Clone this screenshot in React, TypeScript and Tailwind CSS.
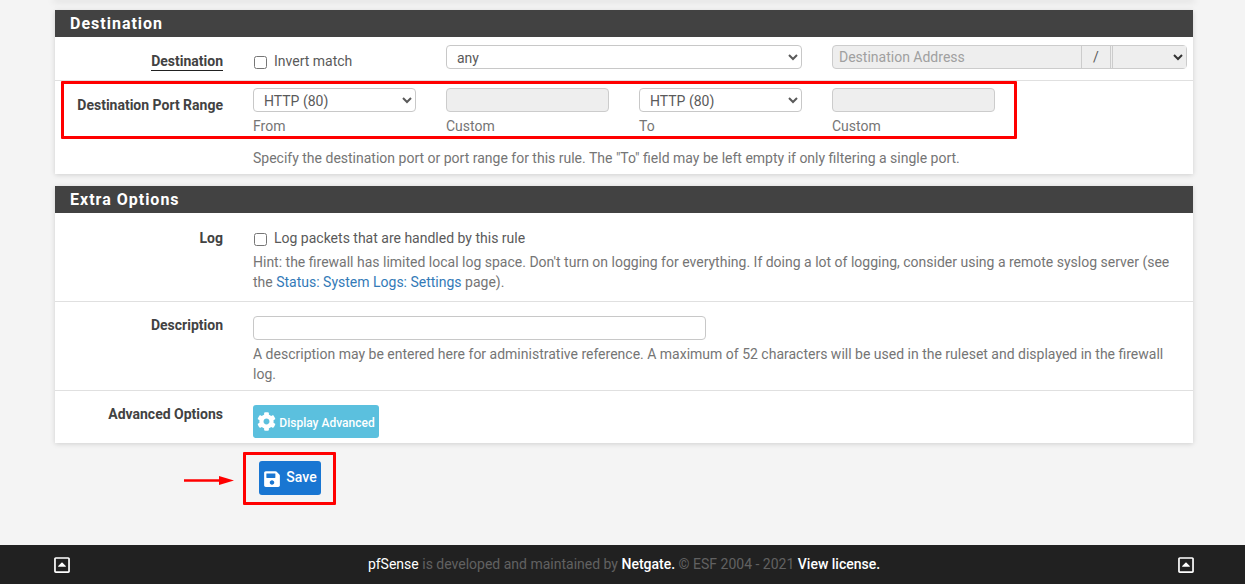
import { FaCog, FaSave, FaRegCaretSquareUp } from "react-icons/fa"

const FONT = "font-['Roboto','Liberation_Sans',sans-serif]"
const SELECT = "block h-[24px] w-full rounded-[4px] border border-[#c8c8c8] bg-white pl-[6px] pt-[1px] text-[14px] text-[#5a5a5a]"
const DISABLED = "h-[24px] w-full rounded-[4px] border border-[#cccccc] bg-[#eeeeee]"

function PanelTitle({ title }: { title: string }) {
  return (
    <div className="flex h-[27px] items-center bg-[#424242] pl-[15px] pt-[1px] text-[16px] font-bold tracking-[1px] text-white">
      {title}
    </div>
  )
}

function RowLabel({ children }: { children: React.ReactNode }) {
  return <div className="-mt-[1px] w-[168px] shrink-0 text-right text-[14px] font-bold text-[#424242]">{children}</div>
}

function PortField({ label, select }: { label: string; select?: boolean }) {
  return (
    <div className="w-[163px]">
      {select ? (
        <select defaultValue="http" className={SELECT}>
          <option value="http">HTTP (80)</option>
        </select>
      ) : (
        <div className={DISABLED} />
      )}
      <div className="mt-[6px] text-[14px] leading-[16px] text-[#757575]">{label}</div>
    </div>
  )
}

export default function App() {
  return (
    <div className={`${FONT} relative flex min-h-screen flex-col overflow-hidden bg-[#f4f4f4]`}>
      <div className="ml-[55px] mr-[52px] h-0 shadow-[0_0_7px_2px_rgba(0,0,0,0.1)]" />

      {/* Destination */}
      <div className="ml-[55px] mr-[52px] mt-[10px] bg-white shadow-[0_1px_5px_rgba(0,0,0,0.15)]">
        <PanelTitle title="Destination" />
        <div className="flex h-[44px] border-b border-[#e0e0e0] pt-[8px]">
          <RowLabel>
            <span className="mt-[9px] inline-block border-b border-[#212121] leading-[17px]">Destination</span>
          </RowLabel>
          <label className="ml-[30px] flex h-[24px] w-[193px] items-center pt-[8px] text-[14px] text-[#5a5a5a]">
            <input type="checkbox" className="ml-[1px] mr-[7px] mt-[2px] h-[13px] w-[13px]" />
            Invert match
          </label>
          <div className="w-[356px]">
            <select defaultValue="any" className={SELECT}>
              <option value="any">any</option>
            </select>
          </div>
          <div className="ml-[30px] flex h-[24px] w-[355px] rounded-[4px] border border-[#cccccc] bg-[#eeeeee] text-[14px]">
            <div className="flex w-[248px] items-center pl-[6px] text-[#a0a0a0]">Destination Address</div>
            <div className="flex w-[30px] items-center justify-center border-x border-[#cccccc] text-[#5a5a5a]">/</div>
            <select defaultValue="" disabled className="ml-[1px] h-full flex-1 border-l border-[#cccccc] bg-[#eeeeee] text-[#333333] opacity-100">
              <option value=""></option>
            </select>
          </div>
        </div>
        <div className="h-[93px] pt-[7px]">
          <div className="flex">
            <RowLabel>
              <span className="mt-[10px] block leading-[17px]">Destination Port Range</span>
            </RowLabel>
            <div className="ml-[30px] flex gap-[30px]">
              <PortField label="From" select />
              <PortField label="Custom" />
              <PortField label="To" select />
              <PortField label="Custom" />
            </div>
          </div>
          <p className="ml-[198px] mt-[16px] text-[14px] leading-[16px] text-[#757575]">
            Specify the destination port or port range for this rule. The "To" field may be left empty if only filtering a single port.
          </p>
        </div>
      </div>

      {/* Extra Options */}
      <div className="ml-[55px] mr-[52px] mt-[12px] bg-white shadow-[0_1px_5px_rgba(0,0,0,0.15)]">
        <PanelTitle title="Extra Options" />
        <div className="flex h-[89px] border-b border-[#e0e0e0] pt-[16px]">
          <RowLabel>Log</RowLabel>
          <div className="ml-[30px] flex-1 pr-[20px]">
            <label className="mt-[1px] flex items-center text-[14px] leading-[17px] text-[#5a5a5a]">
              <input type="checkbox" className="ml-[1px] mr-[7px] mt-[1px] h-[13px] w-[13px]" />
              Log packets that are handled by this rule
            </label>
            <p className="mt-[5px] text-[14px] leading-[20px] text-[#757575]">
              Hint: the firewall has limited local log space. Don't turn on logging for everything. If doing a lot of logging, consider using a remote syslog server (see the <span className="text-[#337ab7]">Status: System Logs: Settings</span> page).
            </p>
          </div>
        </div>
        <div className="flex h-[89px] border-b border-[#e0e0e0] pt-[14px]">
          <RowLabel>Description</RowLabel>
          <div className="ml-[30px] flex-1 pr-[20px]">
            <div className="h-[24px] w-[453px] rounded-[4px] border border-[#c8c8c8] bg-white" />
            <p className="mt-[4px] text-[14px] leading-[20px] text-[#757575]">
              A description may be entered here for administrative reference. A maximum of 52 characters will be used in the ruleset and displayed in the firewall log.
            </p>
          </div>
        </div>
        <div className="flex h-[52px] pt-[14px]">
          <RowLabel>Advanced Options</RowLabel>
          <button className="ml-[30px] flex h-[33px] w-[126px] items-center justify-center gap-[3px] rounded-[3px] bg-[#5bc0de] text-[12px] font-medium text-white">
            <FaCog className="h-[19px] w-[19px] shrink-0" />
            <span className="mt-[3px]">Display Advanced</span>
          </button>
        </div>
      </div>

      <button className="ml-[259px] mt-[18px] flex h-[34px] w-[62px] items-center justify-center gap-[5px] rounded-[3px] bg-[#1976d2] text-[14px] font-medium text-white">
        <FaSave className="mt-[1px] h-[18px] w-[18px] shrink-0" />
        <span className="-mt-[2px]">Save</span>
      </button>

      {/* Footer */}
      <div className="mt-auto flex h-[39px] items-center justify-between bg-[#212121] pl-[54px] pr-[51px] text-[14px] text-[#616161]">
        <FaRegCaretSquareUp className="h-[18px] w-[16px] text-white" />
        <div>
          <span className="text-white">pfSense</span> is developed and maintained by <span className="font-medium text-white">Netgate.</span> © ESF 2004 - 2021 <span className="font-medium text-white">View license.</span>
        </div>
        <FaRegCaretSquareUp className="h-[18px] w-[16px] text-white" />
      </div>

      {/* Red annotations */}
      <div className="absolute left-[61px] top-[81px] h-[58px] w-[956px] rounded-[1px] border-[3px] border-[#ff0000]" />
      <div className="absolute left-[243px] top-[452px] h-[53px] w-[93px] rounded-[1px] border-[3px] border-[#ff0000]" />
      <svg className="absolute left-[184px] top-[475px]" width="51" height="12" viewBox="0 0 51 12">
        <path d="M0 5.5H36" stroke="#ff0000" strokeWidth="2.5" />
        <path d="M35 1L50 5.5L35 10Z" fill="#ff0000" />
      </svg>
    </div>
  )
}
